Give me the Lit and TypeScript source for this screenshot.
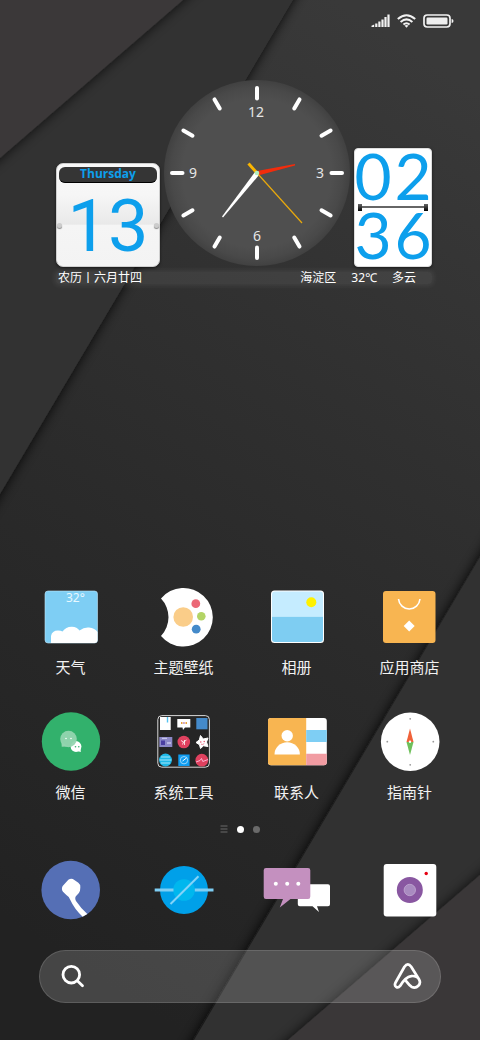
import { LitElement, html, svg, css } from "lit";
import { customElement } from "lit/decorators.js";

const cjk = css`"Noto Sans", "Noto Sans CJK SC", sans-serif`;

@customElement("home-wallpaper")
class HomeWallpaper extends LitElement {
  static styles = css`
    :host { display: block; }
    svg { display: block; width: 100%; height: 100%; }
  `;
  render() {
    return html`<svg viewBox="0 0 480 1040" preserveAspectRatio="none" aria-hidden="true">
      <defs>
        <linearGradient id="base" x1="0.7" y1="0" x2="0.4" y2="1">
          <stop offset="0" stop-color="#393939" />
          <stop offset="0.35" stop-color="#303030" />
          <stop offset="0.6" stop-color="#2a2a2a" />
          <stop offset="1" stop-color="#222" />
        </linearGradient>
        <filter id="soft" x="-20%" y="-20%" width="140%" height="140%"><feGaussianBlur stdDeviation="6" /></filter>
      </defs>
      <rect width="480" height="1040" fill="url(#base)" />
      <path d="M-20-20H305L-20 529Z" fill="#0c0c0c" opacity=".85" filter="url(#soft)" />
      <path d="M0 0H293L0 494Z" fill="#323232" />
      <path d="M-20-20H207L-20 176Z" fill="#111" opacity=".7" filter="url(#soft)" />
      <path d="M0 0H183L0 158Z" fill="#3b3839" />
      <path d="M500 521V1060H180Z" fill="#080808" opacity=".85" filter="url(#soft)" />
      <path d="M480 557V1040H194Z" fill="#313131" />
      <path d="M500 857V1060H264Z" fill="#111" opacity=".7" filter="url(#soft)" />
      <path d="M480 875V1040H288Z" fill="#3a3738" />
    </svg>`;
  }
}

@customElement("status-bar")
class StatusBar extends LitElement {
  static styles = css`
    :host { display: flex; justify-content: flex-end; align-items: center; gap: 7px; height: 41px; padding: 0 26px; }
    svg { display: block; }
  `;
  render() {
    return html`
      <svg width="19" height="14" viewBox="0 0 19 14" fill="#f2f2f2" role="img" aria-label="信号">
        <path d="M.5 11.8 3.200 10.400V13H.5zM4.200 9.400h2.200V13H4.200zM7.300 7.600h2.200V13H7.300zM10.400 5.400h2.200V13h-2.200zM13.400 3h2.200v10h-2.200zM16.400.5h2.200V13h-2.200z" />
      </svg>
      <svg width="19" height="14" viewBox="0 0 19 14" fill="none" stroke="#f2f2f2" stroke-width="2" role="img" aria-label="无线网络">
        <path d="M.8 5Q9.5-2.6 18.2 5M3.6 8Q9.5 2.8 15.4 8M6.4 10.6Q9.5 8 12.6 10.6" />
        <path d="M7.5 11.6Q9.5 10.4 11.5 11.6L9.5 13.8Z" fill="#f2f2f2" stroke="none" />
      </svg>
      <svg width="31" height="14" viewBox="0 0 31 14" role="img" aria-label="电池">
        <rect x="1" y="1" width="26" height="12" rx="3.2" fill="none" stroke="#f2f2f2" stroke-width="1.7" />
        <rect x="3.5" y="3.5" width="21" height="7" rx="1.2" fill="#eee" />
        <path d="M28.6 5Q30.5 5 30.5 7T28.6 9Z" fill="#f2f2f2" />
      </svg>`;
  }
}

@customElement("analog-clock")
class AnalogClock extends LitElement {
  static styles = css`
    :host { display: block; width: 186px; }
    svg { display: block; width: 100%; }
    .numeral { font: 14px "Noto Sans", sans-serif; fill: #e6e6e6; text-anchor: middle; }
  `;
  render() {
    const ticks = Array.from({ length: 12 }, (_, i) => i * 30);
    return html`<svg viewBox="0 0 186 187" role="img" aria-label="02:36">
      <defs>
        <radialGradient id="face">
          <stop offset="0.8" stop-color="#4f4f4f" />
          <stop offset="0.92" stop-color="#494949" />
          <stop offset="1" stop-color="#414141" />
        </radialGradient>
      </defs>
      <circle cx="93" cy="93" r="93" fill="url(#face)" />
      ${ticks.map((a) => svg`<line x1="93" y1="8" x2="93" y2="18.5" stroke="#fff" stroke-width="4" stroke-linecap="round" transform="rotate(${a} 93 93)" />`)}
      <text class="numeral" x="92" y="37">12</text>
      <text class="numeral" x="156" y="98">3</text>
      <text class="numeral" x="93" y="161">6</text>
      <text class="numeral" x="29" y="98">9</text>
      <path d="M93 91 131 84V85.6L94 95.5Z" fill="#f22c0c" />
      <path d="M91 92 58 136.5 59 137.5 95 95Z" fill="#fff" />
      <path d="M84.5 83.5 93 93" stroke="#fab500" stroke-width="3" />
      <path d="M93 93 138 143" stroke="#e9a90c" stroke-width="1.2" />
      <circle cx="93" cy="93" r="2.3" fill="#b5f0c0" />
    </svg>`;
  }
}

@customElement("calendar-card")
class CalendarCard extends LitElement {
  static styles = css`
    :host {
      display: flex; flex-direction: column; box-sizing: border-box; width: 104px; height: 104px; padding: 3px 2px;
      border: 1px solid #cfcfcf; border-radius: 7px; color: #0d9fec;
      background: linear-gradient(#f8f8f8, #f6f6f6 30%, #e9e9e9 59%, #f5f5f5 60%, #f3f3f3);
      box-shadow: 0 1px 3px #0008;
    }
    .weekday {
      height: 16px; border-radius: 6px; background: #353535; border-bottom: 1px solid #000; box-sizing: border-box;
      font: 700 12px/13px "Open Sans", sans-serif; text-align: center;
    }
    .body { position: relative; flex: 1; display: flex; justify-content: center; align-items: flex-end; }
    .day { font: 72px/72px Roboto, sans-serif; }
    .pin { position: absolute; top: 50%; width: 5px; height: 5px; border-radius: 50%; background: #ccc; box-shadow: 0 1px 1px #888; }
    .left { left: -2px; }
    .right { right: -2px; }
  `;
  render() {
    return html`<div class="weekday">Thursday</div>
      <div class="body"><span class="pin left"></span><span class="day">13</span><span class="pin right"></span></div>`;
  }
}

@customElement("flip-clock")
class FlipClock extends LitElement {
  static styles = css`
    :host {
      display: flex; flex-direction: column; box-sizing: border-box; width: 78px; height: 119px;
      border: 1px solid #ddd; border-radius: 4px; background: #fff; box-shadow: 0 1px 3px #0008; color: #0d9fec;
    }
    .pair {
      height: 57px; display: grid; grid-template-columns: 40px 40px; justify-content: center; align-items: start; justify-items: center;
      font: 64px/54px Lato, sans-serif;
    }
    .hinge { height: 2px; display: flex; justify-content: space-between; align-items: center; margin: 0 3px; background: #666; }
    .knob { width: 4px; height: 7px; background: linear-gradient(#666, #000); }
  `;
  render() {
    return html`<div class="pair"><span>0</span><span>2</span></div>
      <div class="hinge"><span class="knob"></span><span class="knob"></span></div>
      <div class="pair"><span>3</span><span>6</span></div>`;
  }
}

const icons = {
  weather: svg`
    <rect x="4" y="4" width="52.5" height="52" rx="3" fill="#7ecef4" stroke="#bfe6f8" stroke-width=".6" />
    <path d="M10 56V49Q11 43.500 17 43.500Q20 43.500 21.500 44.500Q25 39.500 31 39.700Q36 40 38.500 43.500Q43 40 48 40.500Q54 41 56.500 45V53Q56.500 56 53.500 56Z" fill="#fff" />
    <text x="25" y="15" class="temp">32°</text>`,
  themes: svg`
    <path d="M8 11.500A29.300 29.300 0 1 1 8 49A27.200 27.200 0 0 0 8 11.500Z" fill="#fff" />
    <circle cx="30.200" cy="30" r="9.800" fill="#facd89" /><circle cx="42.800" cy="16.700" r="4.400" fill="#eb6877" />
    <circle cx="48.300" cy="29.300" r="4.300" fill="#b3d465" /><circle cx="43.200" cy="42.200" r="4.400" fill="#448aca" />`,
  gallery: svg`
    <rect x="4" y="3.500" width="53" height="52.500" rx="3.500" fill="#fff" />
    <path d="M5 29.700V7.500Q5 4.500 8 4.500H53Q56 4.500 56 7.500V29.700Z" fill="#c5ecff" />
    <path d="M5 29.700V52Q5 55 8 55H53Q56 55 56 52V29.700Z" fill="#7ecdf2" />
    <circle cx="44.300" cy="15.300" r="5" fill="#fff100" />`,
  store: svg`
    <rect x="4" y="4" width="52.500" height="52" rx="3" fill="#f8b551" />
    <path d="M19.500 12A10.800 11 0 0 0 41 12" fill="none" stroke="#fff" stroke-width="1.600" />
    <path d="M30.200 33.500 35.700 39 30.200 44.500 24.700 39Z" fill="#fff" />`,
  wechat: svg`
    <circle cx="30" cy="29.500" r="29.200" fill="#32b16c" />
    <path d="M20.500 30 20.700 34.800 27 34.500Z" fill="#93d5b0" />
    <circle cx="35" cy="34.500" r="5.400" fill="#fff" /><path d="M36 39 39.800 40 39.500 36Z" fill="#fff" />
    <circle cx="27.500" cy="27" r="8.300" fill="#93d5b0" fill-opacity=".95" />
    <circle cx="25" cy="26.500" r=".8" fill="#fff" /><circle cx="30" cy="26.500" r=".8" fill="#fff" />
    <circle cx="34.500" cy="34.800" r=".8" fill="#32b16c" /><circle cx="37.800" cy="34.800" r=".8" fill="#32b16c" />`,
  folder: svg`
    <rect x="4.800" y="3.600" width="51.600" height="51.600" rx="4" fill="#252525" stroke="#d8d8d8" stroke-width="1" />
    <path d="M7 5H17.700V18H7Z" fill="#fff" /><path d="M14.500 5V10.500" stroke="#54c3f1" stroke-width="1.400" />
    <path d="M24.300 7H37.300V15.500H32L30 18 29.500 15.500H24.300Z" fill="#fff" />
    <path d="M28 11H29.500M32.500 11H34" stroke="#e8a33d" stroke-width="2.200" /><path d="M30.200 11H31.700" stroke="#c490bf" stroke-width="2.200" />
    <path d="M43.300 6H54.500V17.300H43.300Z" fill="#448aca" />
    <path d="M6.300 25H19.300V35H6.300Z" fill="#8c88c6" /><path d="M8 28.500H12V33H8Z" fill="#4b3fa0" /><path d="M14 31H18M9 26.300H14" stroke="#c7c5ec" stroke-width="1.300" />
    <circle cx="30.800" cy="30" r="6.300" fill="#e0415f" /><path d="M28 28.500 30.500 30 29.500 32.500M30.500 30 33.500 28M31.500 28V33" stroke="#fff" stroke-width=".8" fill="none" />
    <path d="M47.500 23.500 50.200 27 55 26 53.500 30 55 34.500 50.500 33.800 47.500 36.500 46.500 32.800 43 30.500 46.300 28Z" fill="#fff" stroke="#fff" stroke-linejoin="round" />
    <circle cx="47.800" cy="30" r=".7" fill="#e0415f" /><circle cx="51.200" cy="29.500" r=".7" fill="#e0415f" /><path d="M48 32.200Q50 33 51.300 31.500" stroke="#e0415f" stroke-width=".6" fill="none" />
    <circle cx="12.500" cy="48" r="6.400" fill="#1fb9e8" /><path d="M8 45H17M6.500 48H18.500M8 51H17" stroke="#a7e6fa" stroke-width="1" />
    <path d="M25.300 42.500H36.600V54H25.300Z" fill="#0f9cf0" /><circle cx="31" cy="48.200" r="3.700" fill="none" stroke="#b7e2fb" stroke-width=".8" /><path d="M29.500 49 33.500 46" stroke="#fff" stroke-width="1" />
    <circle cx="48.800" cy="48.200" r="6.400" fill="#e0415f" /><path d="M43 50 47 48.500 48.500 46.500 49.800 49.500 55 47.500" stroke="#fbd" stroke-width=".9" fill="none" />`,
  contacts: svg`
    <clipPath id="card"><rect x="1" y="6" width="58.800" height="47.300" rx="3" /></clipPath>
    <g clip-path="url(#card)">
      <path d="M1 6H60V54H1Z" fill="#fff" /><path d="M1 6H39.200V54H1Z" fill="#f8b551" />
      <path d="M39.200 18H60V30H39.200Z" fill="#7ecef4" /><path d="M39.200 41.700H60V54H39.200Z" fill="#f19ca2" />
    </g>
    <circle cx="20.200" cy="23.700" r="5.700" fill="#fff" /><path d="M7.500 42.500A12.700 12.300 0 0 1 32.900 42.500Z" fill="#fff" />`,
  compass: svg`
    <circle cx="30.200" cy="29.700" r="29.300" fill="#fff" />
    <g fill="#999"><circle cx="30.200" cy="6.800" r=".9" /><circle cx="30.200" cy="52.800" r=".9" /><circle cx="7.300" cy="29.700" r=".9" /><circle cx="53.300" cy="29.700" r=".9" /></g>
    <path d="M30 16.500 33.500 30H26.500Z" fill="#f0623a" /><path d="M26.500 30H33.500L30 43Z" fill="#6fc05b" /><circle cx="30" cy="29.800" r="1.200" fill="#fff" />`,
  phone: svg`
    <circle cx="29.700" cy="30" r="29.300" fill="#556fb5" />
    <path transform="translate(-21 -15) scale(.33333)" d="M145 104Q155 98 163 105L175 113Q182 118 181 127L180 137Q178 145 169 152Q163 158 168 168Q182 189 202 207L188 215Q163 192 151 165Q148 155 139 150L129 140Q123 133 128 123Z" fill="#fff" />`,
  browser: svg`
    <circle cx="30" cy="30" r="24" fill="#00a0e9" /><circle cx="30" cy="30" r="10.800" fill="#00b7ee" />
    <path d="M.7 30H19.500M40.800 30H59.500" stroke="#7ecef4" stroke-width="3" /><path d="M16.500 44 44.500 16.300" stroke="#84d3f7" stroke-width="2" />`,
  messages: svg`
    <path d="M32.800 24.300H61Q63 24.300 63 26.300V44.300Q63 46.300 61 46.300H50L52 52 45.500 46.300H32.800Q30.800 46.300 30.800 44.300V26.300Q30.800 24.300 32.800 24.300Z" fill="#fff" />
    <path d="M-1 8H41Q43.300 8 43.300 10.300V36.500Q43.300 39 41 39H23.500L12.800 47.500 16 39H-1Q-3.300 39-3.300 36.500V10.300Q-3.300 8-1 8Z" fill="#c490bf" />
    <g fill="#fff"><circle cx="8.800" cy="23.800" r="2" /><circle cx="20.200" cy="23.800" r="2" /><circle cx="31.300" cy="23.800" r="2" /></g>`,
  camera: svg`
    <rect x="3.700" y="4" width="52.600" height="52.500" rx="3" fill="#fff" />
    <circle cx="29.800" cy="30" r="13" fill="#8957a1" /><circle cx="29.800" cy="30" r="5.700" fill="#a98bc0" stroke="#c3a9d3" stroke-width=".8" />
    <circle cx="46.200" cy="13.500" r="1.700" fill="#e60012" />`,
};

@customElement("app-root")
class AppRoot extends LitElement {
  static styles = css`
    :host {
      display: flex; flex-direction: column; position: relative; isolation: isolate; overflow: hidden; box-sizing: border-box;
      min-height: 100vh; padding-bottom: 37px; color: #f2f2f2; font-family: ${cjk};
    }
    home-wallpaper { position: absolute; inset: 0; z-index: -1; }
    button { border: 0; padding: 0; margin: 0; background: none; color: inherit; font: inherit; cursor: pointer; }
    .widget { width: 376px; margin: 39px auto 0; padding-left: 8px; }
    .cards { display: flex; align-items: flex-end; gap: 4px; }
    .info {
      display: flex; height: 12px; margin-top: 5px; padding: 0 16px 0 2px; font-size: 12px; line-height: 12px;
      border-radius: 4px; background: #ffffff12; box-shadow: 0 0 5px 2px #ffffff12; white-space: nowrap; color: #fff;
    }
    .place { margin-left: auto; }
    .info span + span + span { margin-left: 15px; }
    .space { flex: 1; min-height: 40px; }
    .row { display: grid; grid-template-columns: repeat(4, 1fr); padding: 0 14px; row-gap: 35px; justify-items: center; }
    .app { display: flex; flex-direction: column; align-items: center; gap: 10px; font-size: 15px; line-height: 20px; white-space: nowrap; }
    .icon { display: block; width: 60px; height: 60px; overflow: visible; }
    .temp { font: 12px "Noto Sans", sans-serif; fill: #e8f8ff; }
    .pages { display: flex; justify-content: center; align-items: center; gap: 8px; margin: 23px 0 27px; }
    .page { width: 8px; height: 8px; display: grid; place-items: center; }
    .dot { width: 7px; height: 7px; border-radius: 50%; background: #6a6a6a; }
    .current { background: #fff; }
    .search {
      display: flex; align-items: center; height: 53px; box-sizing: border-box; margin: 30px 39px 0; padding: 0 18px 0 21px;
      border: 1px solid #ffffff22; border-radius: 27px; background: #ffffff29;
    }
    .search input { flex: 1; min-width: 0; border: 0; outline: 0; background: none; color: #fff; font: 16px/24px ${cjk}; padding: 0 12px; }
    .search svg { display: block; }
  `;

  private apps = [
    ["weather", "天气"], ["themes", "主题壁纸"], ["gallery", "相册"], ["store", "应用商店"],
    ["wechat", "微信"], ["folder", "系统工具"], ["contacts", "联系人"], ["compass", "指南针"],
  ];
  private dock = [["phone", "电话"], ["browser", "浏览器"], ["messages", "短信"], ["camera", "相机"]];

  private icon(name: string) {
    return html`<svg class="icon" viewBox="0 0 60 60" aria-hidden="true">${icons[name as keyof typeof icons]}</svg>`;
  }

  render() {
    return html`
      <home-wallpaper></home-wallpaper>
      <status-bar></status-bar>
      <section class="widget">
        <div class="cards"><calendar-card></calendar-card><analog-clock></analog-clock><flip-clock></flip-clock></div>
        <div class="info"><span>农历丨六月廿四</span><span class="place">海淀区</span><span>32℃</span><span>多云</span></div>
      </section>
      <div class="space"></div>
      <main class="row">
        ${this.apps.map(([name, label]) => html`<button class="app">${this.icon(name)}<span>${label}</span></button>`)}
      </main>
      <nav class="pages">
        <button class="page" aria-label="信息流"><svg width="8" height="8" viewBox="0 0 8 8" stroke="#6a6a6a" stroke-width="1.2"><path d="M.5 1H7.500M.5 4H7.500M.5 7H7.500" /></svg></button>
        <button class="page" aria-label="第一页"><span class="dot current"></span></button>
        <button class="page" aria-label="第二页"><span class="dot"></span></button>
      </nav>
      <footer class="row">
        ${this.dock.map(([name, label]) => html`<button aria-label=${label}>${this.icon(name)}</button>`)}
      </footer>
      <form class="search" @submit=${(e: Event) => e.preventDefault()}>
        <button aria-label="搜索">
          <svg width="24" height="24" viewBox="0 0 24 24" fill="none" stroke="#fff" stroke-width="2.800" stroke-linecap="round"><circle cx="10.300" cy="9.700" r="8.300" /><path d="M16.600 15.900 21.500 20.800" /></svg>
        </button>
        <input type="text" aria-label="搜索内容" />
        <button type="button" aria-label="语音助手">
          <svg width="29" height="29" viewBox="430 350 86 86" fill="none" stroke="#fff" stroke-width="8" stroke-linecap="round" stroke-linejoin="round">
            <path d="M467 404C474 413 478 420 486 424C500 430 516 416 507 401L484 364Q474 350 464 364L438 410C431 423 444 430 451 421C460 406 470 394 484 392Q496 390 504 397" />
          </svg>
        </button>
      </form>`;
  }
}
